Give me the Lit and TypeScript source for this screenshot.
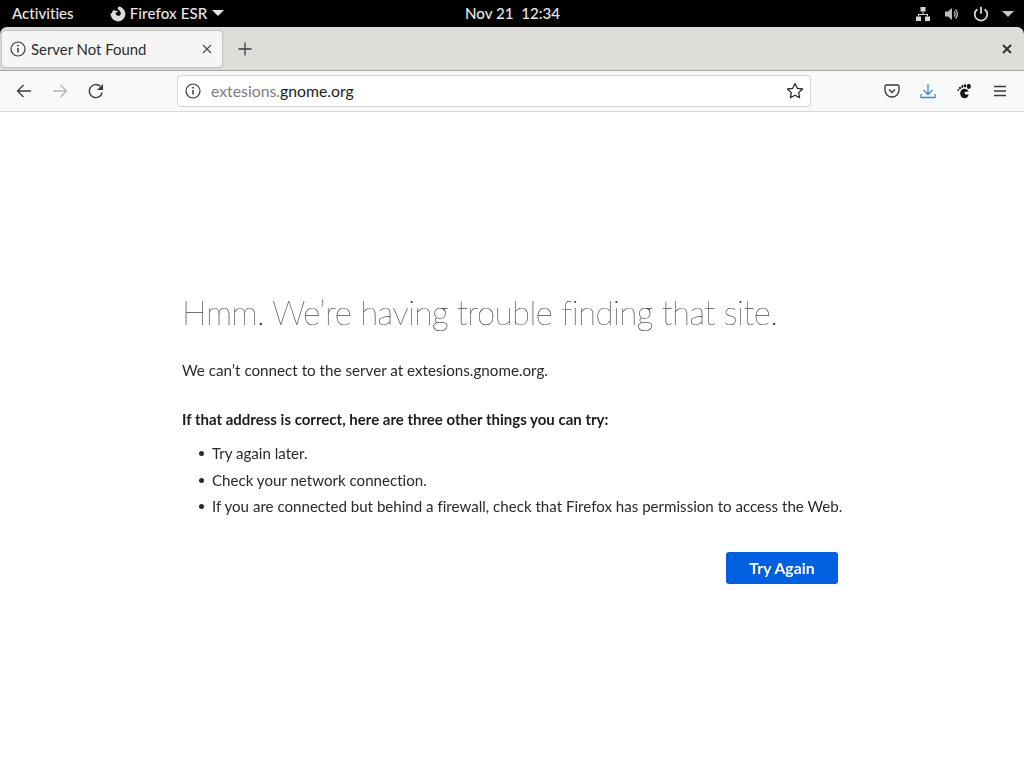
import { LitElement, html, css, svg } from "lit";
import { customElement } from "lit/decorators.js";

const info = svg`<svg class="ic" width="16" height="16" viewBox="0 0 16 16" fill="none" stroke="#3a3a3c" stroke-width="1.2"><circle cx="8" cy="8" r="7"/><path d="M8 7v4.5" stroke-width="1.5"/><circle cx="8" cy="4.7" r=".9" fill="#3a3a3c" stroke="none"/></svg>`;

@customElement("app-root")
export class AppRoot extends LitElement {
  static styles = css`
    :host { display: block; width: 1024px; height: 768px; overflow: hidden; background: #fff; font-family: Lato, "Noto Sans", sans-serif; font-variant-ligatures: none; }
    .panel { height: 27px; background: #000; color: #e8e8e6; font-size: 15.1px; font-weight: 500; display: grid; grid-template-columns: 1fr auto 1fr; align-items: center; padding: 0 10px 2px 12px; box-sizing: border-box; }
    .panel-left, .panel-right { display: flex; align-items: center; }
    .panel-left .app { display: flex; align-items: center; gap: 4px; margin-left: 36px; letter-spacing: .12px; }
    .panel-right { justify-content: flex-end; gap: 13px; }
    .panel-right svg, .app svg { margin-top: 2px; }
    .clock { margin-left: -1px; }
    .caret { width: 0; height: 0; border-left: 6px solid transparent; border-right: 6px solid transparent; border-top: 6px solid #e8e8e6; }
    .window { background: #000; }
    .tabs { height: 43px; display: flex; align-items: center; border-radius: 7px 7px 0 0; background: #deddd9; padding: 0 0 0 2px; border-bottom: 1px solid #a9a8a5; }
    .tab { width: 220px; height: 36px; box-sizing: border-box; background: #f5f5f4; border-radius: 4px; box-shadow: 0 0 3px rgba(0,0,0,.28); display: flex; align-items: center; padding: 0 10px 0 8px; gap: 5px; font-size: 14.9px; color: #2c2c2e; margin-top: 1px; }
    .tab .title { flex: 1; }
    .plus { margin-left: 16px; display: flex; }
    .win-close { margin-left: auto; margin-right: 12px; display: flex; }
    .toolbar { height: 41px; background: #f9f9f9; border-bottom: 1px solid #d6d6d6; display: flex; align-items: center; box-sizing: border-box; }
    .nav { display: flex; align-items: center; gap: 20px; margin-left: 16px; width: 161px; }
    .url { width: 634px; height: 32px; box-sizing: border-box; background: #fff; border: 1px solid #d4d4d4; border-radius: 4px; display: flex; align-items: center; padding: 0 6px 0 7px; font-size: 15.8px; }
    .url .host { flex: 1; margin-left: 10px; color: #1c1c1e; margin-top: -2px; }
    .url .dim { color: #7b7b7d; }
    .actions { display: flex; align-items: center; gap: 20px; margin-left: 73px; }
    .content { padding: 180px 0 0 182px; color: #2a2a2e; will-change: opacity; }
    h1 { margin: 0; font-size: 33px; font-weight: 200; color: #2a2a2f; -webkit-text-stroke: .2px #55555a; line-height: 40px; letter-spacing: -.5px; white-space: nowrap; }
    p { margin: 0; font-size: 15.2px; line-height: 20px; }
    .lead { margin-top: 28px; }
    .strong { margin-top: 29px; font-weight: 700; color: #1c1c20; font-size: 15px; }
    ul { margin: 11px 0 0; padding: 0 0 0 30px; font-size: 15.1px; list-style: none; }
    li { height: 26.5px; line-height: 26px; position: relative; }
    li::before { content: ""; position: absolute; left: -13px; top: 11px; width: 5px; height: 5px; border-radius: 50%; background: #2a2a2e; }
    .action-row { width: 656px; display: flex; justify-content: flex-end; margin-top: 32px; }
    button { width: 112px; height: 32px; border: 0; border-radius: 3px; background: #0060df; color: #fff; font: 700 15.8px Lato, sans-serif; padding: 0; }
  `;

  render() {
    return html`
      <div class="panel">
        <div class="panel-left">
          <span>Activities</span>
          <span class="app">
            <svg width="16" height="16" viewBox="0 0 16 16"><path fill="#dcdcda" fill-rule="evenodd" d="M8 .6a7.4 7.4 0 1 1-7.2 5.800c.3.6.7 1 1.200 1.200C1.900 5.500 3 4 4.700 3.400 4.300 4 4.300 4.600 4.600 5.100 5.500 4.500 7 4.800 8.300 5.400 7.600 6 6.300 6.200 5.800 6.500 5.200 8.500 7 10 8.600 9.800c1.500-.2 2.500-1.500 2.100-3.100C10.300 4.900 8.800 3.600 7.200 3c1-.5 .9-1.500.8-2.400z"/></svg>
            <span>Firefox ESR</span><span class="caret"></span>
          </span>
        </div>
        <span class="clock">Nov 21&nbsp; 12:34</span>
        <div class="panel-right">
          <svg width="16" height="16" viewBox="0 0 16 16" fill="#d8d8d6"><rect x="5.500" y="1" width="5" height="4.500"/><rect x="1" y="10.500" width="5" height="4.500"/><rect x="10" y="10.500" width="5" height="4.500"/><path d="M7.500 5.500h1V8h4.500v2.500h-1V9H4v1.500H3V8h4.500z"/></svg>
          <svg width="16" height="16" viewBox="0 0 16 16" fill="none"><path fill="#bdbdbb" d="M1 5.500h3L8 2v12l-4-3.500H1z"/><path d="M10 5.500a3.500 3.500 0 0 1 0 5M11.500 3.500a6.500 6.500 0 0 1 0 9" stroke="#c8c8c6" stroke-width="1.300"/></svg>
          <svg width="16" height="16" viewBox="0 0 16 16" fill="none" stroke="#e0e0de" stroke-width="1.700"><path d="M4.400 3.200a6.300 6.300 0 1 0 7.200 0M8 .8v7"/></svg>
          <span class="caret" style="border-top-color:#c8c8c6;margin-top:2px"></span>
        </div>
      </div>
      <div class="window">
        <div class="tabs">
          <div class="tab">
            ${info}
            <span class="title">Server Not Found</span>
            <svg width="10" height="10" viewBox="0 0 10 10" stroke="#4a4a4c" stroke-width="1.100"><path d="M1 1l8 8M9 1l-8 8"/></svg>
          </div>
          <span class="plus"><svg width="14" height="14" viewBox="0 0 14 14" stroke="#3a3a3c" stroke-width="1.300"><path d="M7 .5v13M.5 7h13"/></svg></span>
          <span class="win-close"><svg width="10" height="10" viewBox="0 0 10 10" stroke="#2e3436" stroke-width="2"><path d="M1 1l8 8M9 1l-8 8"/></svg></span>
        </div>
        <div class="toolbar">
          <div class="nav">
            <svg width="16" height="16" viewBox="0 0 16 16" fill="none" stroke="#3a3a3c" stroke-width="1.300"><path d="M15 8H1.500M7.500 2 1.500 8l6 6"/></svg>
            <svg width="16" height="16" viewBox="0 0 16 16" fill="none" stroke="#b4b4b6" stroke-width="1.300"><path d="M1 8h13.500M8.500 2l6 6-6 6"/></svg>
            <svg width="16" height="16" viewBox="0 0 16 16" fill="none" stroke="#3a3a3c" stroke-width="1.400"><path d="M14.200 9.500A6.500 6.500 0 1 1 12.300 3.300"/><path d="M15 1v6H9z" fill="#3a3a3c" stroke="none"/></svg>
          </div>
          <div class="url">
            ${info}
            <span class="host"><span class="dim">extesions.</span>gnome.org</span>
            <svg width="18" height="18" viewBox="0 0 18 18" fill="none" stroke="#2a2a2e" stroke-width="1.300" stroke-linejoin="round"><path d="M9 1.500l2.300 4.800 5.200.7-3.800 3.600.9 5.200L9 13.300l-4.600 2.500.9-5.200L1.500 7l5.200-.7z"/></svg>
          </div>
          <div class="actions">
            <svg width="16" height="16" viewBox="0 0 16 16" fill="none" stroke="#3a3a3c" stroke-width="1.300"><path d="M2.500 2h11A1.500 1.500 0 0 1 15 3.500V7A7 7 0 0 1 1 7V3.500A1.500 1.500 0 0 1 2.500 2z"/><path d="M5 6.500l3 3 3-3" stroke-width="1.500"/></svg>
            <svg width="16" height="16" viewBox="0 0 16 16" fill="none" stroke="#3f8bd8" stroke-width="1.300"><path d="M8 1v10M3.500 7 8 11.500 12.500 7M1 11v3.500h14V11"/></svg>
            <svg width="16" height="16" viewBox="0 0 16 16" fill="#141416"><ellipse cx="8.500" cy="10.500" rx="4.300" ry="4.800"/><ellipse cx="12.800" cy="3.300" rx="2" ry="2.600"/><ellipse cx="9" cy="2.700" rx="1.200" ry="1.800"/><ellipse cx="6.300" cy="3.500" rx="1" ry="1.400"/><ellipse cx="4" cy="5" rx="1" ry="1.200"/><ellipse cx="2.300" cy="7" rx=".9" ry="1"/><ellipse cx="11.500" cy="10" rx="3" ry="1.500" fill="#f9f9f9"/></svg>
            <svg width="16" height="16" viewBox="0 0 16 16" stroke="#3a3a3c" stroke-width="1.300"><path d="M2 3.500h12M2 8h12M2 12.500h12"/></svg>
          </div>
        </div>
      </div>
      <main class="content">
        <h1>Hmm. We’re having trouble finding that site.</h1>
        <p class="lead">We can’t connect to the server at extesions.gnome.org.</p>
        <p class="strong">If that address is correct, here are three other things you can try:</p>
        <ul>
          <li>Try again later.</li>
          <li>Check your network connection.</li>
          <li>If you are connected but behind a firewall, check that Firefox has permission to access the Web.</li>
        </ul>
        <div class="action-row"><button>Try Again</button></div>
      </main>
    `;
  }
}
